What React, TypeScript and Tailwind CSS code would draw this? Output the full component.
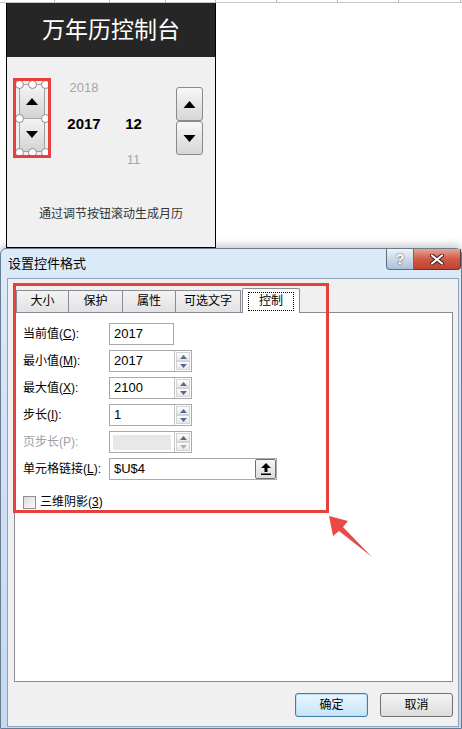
import clsx from 'clsx';
import type { ReactNode } from 'react';

const Tri = ({ dir, className }: { dir: 'up' | 'down'; className?: string }) => (
  <svg viewBox="0 0 12 7" className={className}>
    <path d={dir === 'up' ? 'M6 0L12 7H0Z' : 'M0 0H12L6 7Z'} fill="currentColor" />
  </svg>
);

// sheet column ticks above the panel
const gridCells = ['w-[55px]', 'w-[55px]', 'w-[56px]', 'w-[50px]', 'w-[61px]', 'w-[61px]', 'w-[61px]', 'w-[62px]'];

const handles = [
  'left-[2px] top-[2px]',
  'left-[15px] top-[2px]',
  'left-[28px] top-[2px]',
  'left-[2px] top-[36px]',
  'left-[28px] top-[36px]',
  'left-[2px] top-[70px]',
  'left-[15px] top-[70px]',
  'left-[28px] top-[70px]',
];

const CalendarPanel = () => (
  <div className="ml-[6px] flex h-[245px] w-[210px] flex-col border-x border-b border-black">
    <div className="flex h-[54px] items-center justify-center bg-[#262626] text-[23px] text-white">
      万年历控制台
    </div>
    <div className="flex flex-1 flex-col bg-[#f0f0f0] pt-[13px]">
      <div className="flex items-start">
        {/* selected form control with handles */}
        <div className="relative ml-[6px] mt-[8px] h-[80px] w-[38px]">
          <div className="absolute left-[6px] top-[6px] flex h-[68px] w-[26px] flex-col border border-[#a0a0a0]">
            <div className="flex flex-1 items-center justify-center border-b border-[#a8a8a8] bg-gradient-to-b from-[#f4f4f4] to-[#d4d4d4] text-black">
              <Tri dir="up" className="h-[7px] w-[12px]" />
            </div>
            <div className="flex flex-1 items-center justify-center bg-gradient-to-b from-[#f4f4f4] to-[#d4d4d4] text-black">
              <Tri dir="down" className="h-[7px] w-[12px]" />
            </div>
          </div>
          {handles.map((h) => (
            <span
              key={h}
              className={clsx('absolute h-[9px] w-[9px] rounded-full border border-[#8a8a8a] bg-white', h)}
            />
          ))}
          <div className="absolute inset-0 border-[3px] border-[#e5403e]" />
        </div>
        <div className="grid grid-cols-[66px_33px] grid-rows-[36px_36px_36px] items-center justify-items-center">
          <span className="text-[13px] text-[#a6a6a6]">2018</span>
          <span />
          <span className="text-[15px] font-bold text-black">2017</span>
          <span className="text-[15px] font-bold text-black">12</span>
          <span />
          <span className="text-[13px] text-[#a6a6a6]">11</span>
        </div>
        <div className="ml-[26px] mt-[17px] flex w-[27px] flex-col">
          <div className="flex h-[34px] items-center justify-center rounded-[3px] border border-[#8a8a8a] bg-gradient-to-b from-[#f8f8f8] to-[#d6d6d6] text-black">
            <Tri dir="up" className="h-[7px] w-[13px]" />
          </div>
          <div className="flex h-[34px] items-center justify-center rounded-[3px] border border-[#8a8a8a] bg-gradient-to-b from-[#f8f8f8] to-[#d6d6d6] text-black">
            <Tri dir="down" className="h-[7px] w-[13px]" />
          </div>
        </div>
      </div>
      <div className="mt-[28px] text-center text-[12px] leading-[16px] text-[#333]">通过调节按钮滚动生成月历</div>
    </div>
  </div>
);

const SmallSpin = ({ disabled }: { disabled?: boolean }) => (
  <div className="flex h-full w-[17px] flex-col border-l border-[#c4c4c4] p-px">
    <div className="flex flex-1 items-center justify-center border border-[#d4d4d4] bg-gradient-to-b from-[#fcfcfc] to-[#e8e8e8] text-[#566a91]">
      <Tri dir="up" className="h-[4px] w-[7px]" />
    </div>
    <div
      className={clsx(
        'flex flex-1 items-center justify-center border border-[#d4d4d4] bg-gradient-to-b from-[#fcfcfc] to-[#e8e8e8]',
        disabled ? 'text-[#b0b0b0]' : 'text-[#566a91]',
      )}
    >
      <Tri dir="down" className="h-[4px] w-[7px]" />
    </div>
  </div>
);

const Field = ({
  label,
  value,
  width,
  spin,
  disabled,
  picker,
}: {
  label: ReactNode;
  value?: string;
  width: string;
  spin?: boolean;
  disabled?: boolean;
  picker?: boolean;
}) => (
  <>
    <span className={clsx('text-[12px] leading-[16px]', disabled ? 'text-[#a0a0a0]' : 'text-black')}>{label}</span>
    <div className={clsx('flex h-[22px] items-stretch border border-[#a9a9a9] bg-white', width)}>
      <div className="flex flex-1 items-center px-[3px]">
        {disabled ? (
          <div className="h-[15px] w-full bg-[#e8e8e8]" />
        ) : (
          <span className="pl-[1px] text-[13px] text-black">{value}</span>
        )}
      </div>
      {spin && <SmallSpin disabled={disabled} />}
      {picker && (
        <div className="flex w-[21px] items-center justify-center rounded-[2px] border border-[#707070] bg-gradient-to-b from-[#f6f6f6] to-[#dcdcdc]">
          <svg viewBox="0 0 10 12" className="h-[12px] w-[10px]">
            <path d="M5 0L10 5H6.5V9H3.5V5H0Z" fill="#000" />
            <rect x="0" y="10.5" width="10" height="1.5" fill="#000" />
          </svg>
        </div>
      )}
    </div>
  </>
);

const tabs = [
  { label: '大小', w: 'w-[53px]' },
  { label: '保护', w: 'w-[55px]' },
  { label: '属性', w: 'w-[54px]' },
  { label: '可选文字', w: 'w-[66px]' },
];

const FormatDialog = () => (
  <div className="flex h-[481px] flex-col rounded-t-[6px] border border-[#6b7b8f] bg-gradient-to-b from-[#dcebf9] via-[#cde0f5] to-[#c4daf1] shadow-[0_-3px_8px_rgba(0,0,0,0.22)]">
    <div className="flex h-[29px] items-start justify-between">
      <span className="pl-[7px] pt-[7px] text-[13px] leading-[16px] text-black">设置控件格式</span>
      <div className="flex h-[21px]">
        <div className="flex w-[28px] items-center justify-center rounded-bl-[4px] border border-t-0 border-[#5d6f87] bg-gradient-to-b from-[#eef3f9] to-[#aebfd5] text-[14px] font-bold text-white [text-shadow:0_0_2px_#333]">
          ?
        </div>
        <div className="flex w-[47px] items-center justify-center rounded-br-[4px] border border-l-0 border-t-0 border-[#5d3a3a] bg-gradient-to-b from-[#e6a494] via-[#cf5a44] to-[#c0442e]">
          <svg viewBox="0 0 14 11" className="h-[11px] w-[14px]">
            <path d="M2 1.5L12 9.5M12 1.5L2 9.5" stroke="#3a1a1a" strokeWidth="4" strokeLinecap="round" />
            <path d="M2 1.5L12 9.5M12 1.5L2 9.5" stroke="#fff" strokeWidth="2.2" strokeLinecap="round" />
          </svg>
        </div>
      </div>
    </div>
    <div className="mb-px ml-[6px] mr-[2px] flex flex-1 flex-col border border-[#8ea3bd] bg-[#f0f0f0] pt-[9px]">
      <div className="relative z-10 -mb-px ml-[8px] flex h-[25px] items-end">
        {tabs.map((t) => (
          <div
            key={t.label}
            className={clsx(
              '-ml-px flex h-[23px] items-center justify-center border border-[#898c95] bg-gradient-to-b from-[#f3f3f3] to-[#e2e2e2] pb-px text-[12px] text-black first:ml-0',
              t.w,
            )}
          >
            {t.label}
          </div>
        ))}
        <div className="ml-px flex h-[25px] w-[58px] items-start justify-center rounded-t-[2px] border border-b-0 border-[#898c95] bg-white pt-[3px]">
          <span className="border border-dotted border-black px-[10px] text-[12px] leading-[17px] text-black">控制</span>
        </div>
      </div>
      <div className="ml-[6px] mr-[5px] h-[370px] border border-[#898c95] bg-white pl-[8px] pt-[10px]">
        <div className="grid grid-cols-[86px_auto] items-center justify-items-start gap-y-[5px]">
          <Field label={<>当前值(<u>C</u>):</>} value="2017" width="w-[65px]" />
          <Field label={<>最小值(<u>M</u>):</>} value="2017" width="w-[83px]" spin />
          <Field label={<>最大值(<u>X</u>):</>} value="2100" width="w-[83px]" spin />
          <Field label={<>步长(<u>I</u>):</>} value="1" width="w-[83px]" spin />
          <Field label="页步长(P):" width="w-[83px]" spin disabled />
          <Field label={<>单元格链接(<u>L</u>):</>} value="$U$4" width="w-[168px]" picker />
        </div>
        <div className="mt-[14px] flex items-center gap-[4px]">
          <span className="h-[13px] w-[13px] border border-[#8f8f8f] bg-gradient-to-br from-[#dcdcdc] to-[#fbfbfb]" />
          <span className="text-[12px] leading-[16px] text-black">
            三维阴影(<u>3</u>)
          </span>
        </div>
      </div>
      <div className="mr-[5px] mt-[11px] flex justify-end gap-[12px]">
        <button className="h-[24px] w-[73px] rounded-[3px] border border-[#3c7fb1] bg-gradient-to-b from-[#eaf6fd] to-[#c8e3f6] text-[12px] text-black shadow-[inset_0_0_0_1px_#b9e0f7]">
          确定
        </button>
        <button className="h-[24px] w-[73px] rounded-[3px] border border-[#707070] bg-gradient-to-b from-[#f4f4f4] to-[#dcdcdc] text-[12px] text-black">
          取消
        </button>
      </div>
    </div>
  </div>
);

export default function App() {
  return (
    <div className="relative h-[729px] w-[462px] overflow-hidden bg-white [font-family:'Liberation_Sans','Noto_Sans_CJK_SC',sans-serif]">
      <div className="flex h-[3px] border-b border-[#c8c8c8]">
        {gridCells.map((w, i) => (
          <div key={i} className={clsx('h-full border-r border-[#b8b8b8]', w)} />
        ))}
      </div>
      <CalendarPanel />
      <FormatDialog />

      {/* annotation: red frame around the control tab */}
      <div className="absolute left-[13px] top-[283px] h-[230px] w-[316px] border-[3px] border-[#e5403e]" />
      {/* annotation arrow */}
      <svg className="absolute left-0 top-0 h-[729px] w-[462px]" viewBox="0 0 462 729">
        <path d="M329 516L348 521L343 527L372 557L339 531L333 536Z" fill="#ea4a45" />
      </svg>
    </div>
  );
}
